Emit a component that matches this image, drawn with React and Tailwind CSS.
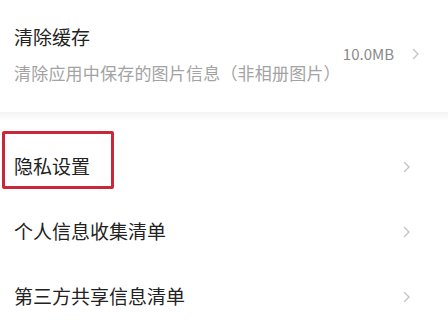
import React from 'react';

const font = { fontFamily: '"Noto Sans CJK SC", "Noto Sans", sans-serif' };

// small grey chevron on the right of each row
const Chevron = () => (
    <svg width="8" height="12" viewBox="0 0 8 12" className="shrink-0">
        <path d="M1.5 1.5 L6 6 L1.5 10.5" fill="none" stroke="#c4c4c4" strokeWidth="1.4" strokeLinecap="round" strokeLinejoin="round" />
    </svg>
);

const Row = ({ label, children }) => (
    <div className="relative flex items-center justify-between h-[65px] pl-[14px] pr-[37px]">
        <span className="text-[19px] text-[#222]">{label}</span>
        <Chevron />
        {children}
    </div>
);

export default function App() {
    return (
        <div className="w-[448px] h-[325px] bg-white overflow-hidden" style={font}>
            {/* clear cache */}
            <div className="flex items-center justify-between h-[112px] pl-[14px] pr-[28px]">
                <div className="flex flex-col -mt-[4px]">
                    <span className="text-[19px] leading-[26px] text-[#222]">清除缓存</span>
                    <span className="mt-[11px] text-[17px] leading-[24px] tracking-[0.2px] text-[#a3a3a3]">清除应用中保存的图片信息（非相册图片）</span>
                </div>
                <div className="flex items-center gap-[18px] -mt-[4px]">
                    <span className="text-[15px] text-[#8a8a8a]">10.0MB</span>
                    <Chevron />
                </div>
            </div>

            {/* faint divider band */}
            <div className="h-[9px] bg-gradient-to-b from-[#f4f4f4] to-white" />

            <div className="pt-[13px]">
                <Row label="隐私设置">
                    <div className="absolute left-[2px] top-[-3px] w-[112px] h-[58px] border-[3px] border-[#c9283a] rounded-[2px]" />
                </Row>
                <Row label="个人信息收集清单" />
                <Row label="第三方共享信息清单" />
            </div>
        </div>
    );
}
